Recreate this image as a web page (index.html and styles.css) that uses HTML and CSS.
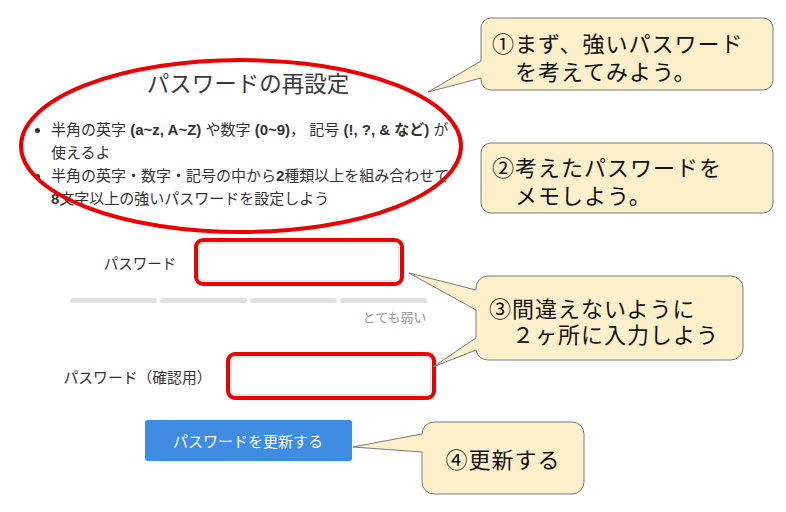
FILE: index.html
```html
<!DOCTYPE html>
<html lang="ja">
<head>
<meta charset="utf-8">
<title>パスワードの再設定</title>
<link rel="stylesheet" href="styles.css">
</head>
<body>
<div class="page">
  <section class="card">
    <h1 class="title">パスワードの再設定</h1>
    <ul class="rules">
      <li>半角の英字 <b>(a~z, A~Z)</b> や数字 <b>(0~9)</b>，  記号 <b>(!, ?, &amp; など)</b> が使えるよ</li>
      <li>半角の英字・数字・記号の中から<b>2</b>種類以上を組み合わせて<b>8</b>文字以上の強いパスワードを設定しよう</li>
    </ul>
  </section>
  <form class="form">
    <div class="row row-first">
      <label class="label">パスワード</label>
      <span class="mark"><input class="input" type="password"></span>
    </div>
    <div class="meter"><span></span><span></span><span></span><span></span></div>
    <div class="meter-label">とても弱い</div>
    <div class="row row-second">
      <label class="label">パスワード（確認用）</label>
      <span class="mark"><input class="input" type="password"></span>
    </div>
    <button type="button" class="submit">パスワードを更新する</button>
  </form>
</div>

<svg class="overlay" width="786" height="512" viewBox="0 0 786 512">
  <ellipse class="ring" cx="241" cy="146" rx="220" ry="86"/>
  <path class="bubble" d="M491,18 H763 A10,10 0 0 1 773,28 V80 A10,10 0 0 1 763,90 H491 A10,10 0 0 1 481,80 V78 L428,92 L481,61 V28 A10,10 0 0 1 491,18 Z"/>
  <rect class="bubble" x="481" y="143" width="292" height="70" rx="10" ry="10"/>
  <path class="bubble" d="M488,276 H731 A12,12 0 0 1 743,288 V348 A12,12 0 0 1 731,360 H488 A12,12 0 0 1 476,350 L433,367 L476,338 V310 L409,273 L476,290 V288 A12,12 0 0 1 488,276 Z"/>
  <path class="bubble" d="M434,422 H572 A12,12 0 0 1 584,434 V482 A12,12 0 0 1 572,494 H434 A12,12 0 0 1 422,482 V452 L353,447 L422,434 A12,12 0 0 1 434,422 Z"/>
</svg>

<div class="note note-1">①まず、強いパスワード<br>　を考えてみよう。</div>
<div class="note note-2">②考えたパスワードを<br>　メモしよう。</div>
<div class="note note-3">③間違えないように<br>　２ヶ所に入力しよう</div>
<div class="note note-4">④更新する</div>
</body>
</html>
```
FILE: styles.css
```css
html, body {
  margin: 0;
  padding: 0;
  background: #ffffff;
}
body {
  position: relative;
  width: 786px;
  height: 512px;
  overflow: hidden;
  font-family: "Liberation Sans", "Noto Sans CJK JP", sans-serif;
  color: #333333;
}
.page {
  display: flex;
  flex-direction: column;
  padding-top: 67px;
}
.card {
  margin-left: 36px;
  width: 424px;
}
.title {
  margin: 0;
  font-family: "Noto Sans CJK JP", sans-serif;
  font-size: 22.5px;
  line-height: 30px;
  font-weight: 400;
  text-align: center;
  color: #3a3a3a;
}
.rules {
  margin: 21px 0 0;
  padding: 0 6px 0 15px;
  font-size: 15px;
  line-height: 23px;
  color: #333333;
}
.rules b {
  font-weight: 700;
}
.form {
  width: 496px;
  margin-top: 28px;
  display: flex;
  flex-direction: column;
  align-items: center;
}
.row {
  display: flex;
  align-items: center;
  gap: 18px;
}
.row-first {
  margin-left: 12px;
}
.row-second {
  margin-top: 27px;
  margin-left: 4px;
  gap: 15px;
}
.label {
  font-size: 14.5px;
  color: #333333;
}
.row-second .label {
  font-size: 14.8px;
}
.mark {
  display: inline-block;
  border: 4px solid #ee0000;
  border-radius: 9px;
  padding: 1px;
  background: #ffffff;
}
.input {
  display: block;
  box-sizing: border-box;
  width: 200px;
  height: 38px;
  margin: 0;
  border: 1px solid #e2e2e2;
  border-radius: 4px;
  background: #ffffff;
  outline: none;
}
.meter {
  margin-top: 12px;
  width: 357px;
  display: flex;
  gap: 3px;
}
.meter span {
  flex: 1;
  height: 5px;
  border-radius: 3px;
  background: #e1e1e1;
}
.meter-label {
  width: 357px;
  margin-top: 6px;
  text-align: right;
  font-family: "Noto Sans CJK JP", sans-serif;
  font-size: 13px;
  line-height: 16px;
  color: #9a9a9a;
}
.submit {
  margin-top: 20px;
  width: 207px;
  height: 41px;
  border: none;
  border-radius: 3px;
  background: #408ce3;
  color: #ffffff;
  font-family: "Liberation Sans", "Noto Sans CJK JP", sans-serif;
  font-size: 15px;
}
.overlay {
  position: absolute;
  left: 0;
  top: 0;
  pointer-events: none;
}
.ring {
  fill: none;
  stroke: #ea0000;
  stroke-width: 4;
}
.bubble {
  fill: #fdf0cb;
  stroke: #7a7a7a;
  stroke-width: 1;
}
.note {
  position: absolute;
  font-family: "Noto Sans CJK JP", sans-serif;
  font-size: 22px;
  font-weight: 400;
  letter-spacing: 1px;
  line-height: 28px;
  color: #111111;
  white-space: nowrap;
}
.note-1 {
  left: 492px;
  top: 28px;
}
.note-2 {
  left: 492px;
  top: 152px;
}
.note-3 {
  left: 489px;
  top: 294px;
  line-height: 26px;
}
.note-4 {
  left: 422px;
  top: 422px;
  width: 162px;
  height: 72px;
  display: flex;
  align-items: center;
  justify-content: center;
}
```
